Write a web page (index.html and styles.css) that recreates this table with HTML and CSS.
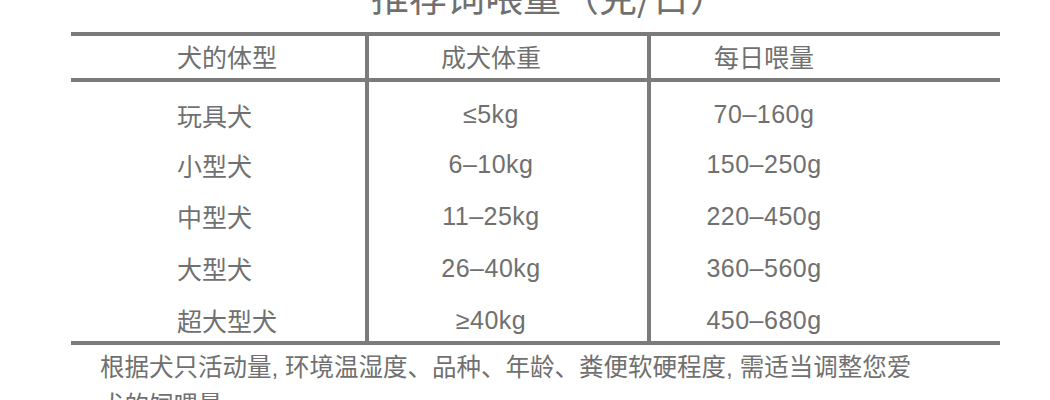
FILE: index.html
```html
<!DOCTYPE html>
<html lang="zh-CN">
<head>
<meta charset="utf-8">
<title>推荐饲喂量</title>
<link rel="stylesheet" href="styles.css">
</head>
<body>
<div class="page">
  <div class="title-wrap"><h1 class="title">推荐饲喂量（克/日）</h1></div>
  <table class="feed">
    <colgroup>
      <col class="col1"><col class="col2"><col class="col3">
    </colgroup>
    <thead>
      <tr>
        <th class="c1">犬的体型</th>
        <th class="c2">成犬体重</th>
        <th class="c3">每日喂量</th>
      </tr>
    </thead>
    <tbody>
      <tr class="first">
        <td class="c1">玩具犬</td>
        <td class="c2">≤5kg</td>
        <td class="c3">70–160g</td>
      </tr>
      <tr class="second">
        <td class="c1">小型犬</td>
        <td class="c2">6–10kg</td>
        <td class="c3">150–250g</td>
      </tr>
      <tr>
        <td class="c1">中型犬</td>
        <td class="c2">11–25kg</td>
        <td class="c3">220–450g</td>
      </tr>
      <tr>
        <td class="c1">大型犬</td>
        <td class="c2">26–40kg</td>
        <td class="c3">360–560g</td>
      </tr>
      <tr class="last">
        <td class="c1">超大型犬</td>
        <td class="c2">≥40kg</td>
        <td class="c3">450–680g</td>
      </tr>
    </tbody>
  </table>
  <p class="note">根据犬只活动量, 环境温湿度、品种、年龄、粪便软硬程度, 需适当调整您爱犬的饲喂量。</p>
</div>
</body>
</html>
```
FILE: styles.css
```css
html, body {
  margin: 0;
  padding: 0;
  background: #ffffff;
}

body {
  font-family: "Liberation Sans", "Noto Sans CJK SC", sans-serif;
  color: #707070;
  overflow: hidden;
}

.page {
  padding-left: 71px;
  width: 929px;
}

.title-wrap {
  display: flow-root;
  height: 32px;
}

.title {
  margin: -24px 0 0 0;
  padding-left: 28px;
  font-family: "Noto Sans CJK SC", sans-serif;
  font-weight: 400;
  font-size: 38px;
  line-height: 38px;
  text-align: center;
  color: #707070;
}

.feed {
  width: 929px;
  table-layout: fixed;
  border-collapse: separate;
  border-spacing: 0;
  font-size: 25px;
  color: #707070;
}

.col1 { width: 298px; }
.col2 { width: 282px; }
.col3 { width: 349px; }

.feed th,
.feed td {
  padding: 0;
  font-weight: 400;
  vertical-align: middle;
  white-space: nowrap;
  box-sizing: border-box;
}

.feed th {
  height: 50px;
  border-top: 4px solid #7b7b7b;
  border-bottom: 4px solid #7b7b7b;
  padding-bottom: 3px;
  font-family: "Noto Sans CJK SC", sans-serif;
}

.feed td {
  height: 52px;
  letter-spacing: 0.5px;
}

.feed td.c1 {
  font-family: "Noto Sans CJK SC", sans-serif;
  letter-spacing: 0;
}

.feed .c1 {
  text-align: left;
  padding-left: 106px;
  border-right: 4px solid #7b7b7b;
}

.feed .c2 {
  text-align: center;
  padding-right: 34px;
  border-right: 4px solid #7b7b7b;
}

.feed .c3 {
  text-align: center;
  padding-right: 123px;
}

.feed tr.first td {
  height: 57px;
  padding-top: 8px;
}

.feed tr.second td {
  height: 51px;
}

.feed tr.last td {
  height: 51px;
  padding-top: 5px;
  border-bottom: 4px solid #7b7b7b;
}

.note {
  margin: 0;
  padding: 4px 0 0 29px;
  width: 830px;
  font-size: 24.5px;
  line-height: 38px;
  color: #707070;
}
```
